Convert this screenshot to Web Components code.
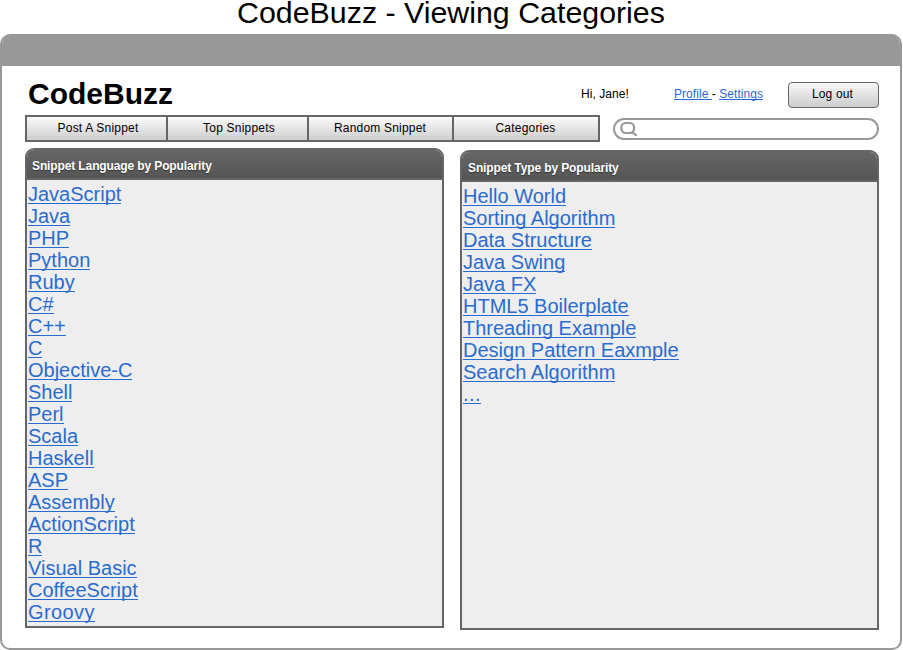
<!DOCTYPE html>
<html lang="en"><head><meta charset="utf-8"><title>CodeBuzz - Viewing Categories</title>
<style>
html,body{margin:0;background:#fff}
body{width:903px;height:650px;overflow:hidden;font-family:"Liberation Sans",Arial,sans-serif;color:#000}
</style></head><body>
<cb-page></cb-page>
<script>
const define=(name,html)=>{
  const t=document.createElement('template');t.innerHTML=html;
  customElements.define(name,class extends HTMLElement{
    constructor(){super();this.attachShadow({mode:'open'}).append(t.content.cloneNode(true));}
  });
};
define('cb-link',`<style>
:host{display:inline-block;color:#2a6bd0}
a{display:inline-block;color:inherit;text-decoration:none;line-height:inherit;
 background:linear-gradient(currentColor,currentColor) 0 var(--u,20px)/100% 1px no-repeat}
</style><a><slot></slot></a>`);
define('cb-button',`<style>
:host{display:flex;justify-content:center;box-sizing:border-box;width:91px;height:26px;border:1px solid #666;border-radius:4px;background:linear-gradient(#f8f8f8,#ccc);font-size:12px;line-height:22px;letter-spacing:.15px;padding-right:2px}
</style><slot></slot>`);
define('cb-tab',`<style>
:host{display:flex;justify-content:center;background:linear-gradient(#fbfbfb,#cecece);font-size:12px;line-height:22px;letter-spacing:.2px}
:host(:nth-child(-n+2)){padding-left:3px}
:host(:nth-child(n+3)){padding-right:1px}
</style><slot></slot>`);
define('cb-nav',`<style>
:host{display:grid;grid-template-columns:139px 139px 143px 144px;gap:2px;box-sizing:border-box;width:575px;height:27px;padding:2px;background:#666}
</style><slot></slot>`);
define('cb-search',`<style>
:host{display:flex;box-sizing:border-box;width:266px;height:22px;margin-top:3px;border:2px solid #999;border-radius:11px;background:#fff;padding:1px 0 0 5px}
svg{display:block}
</style><svg width="18" height="16" viewBox="0 0 18 16" fill="none" stroke="#999" stroke-width="2.2"><rect x="1.4" y="2" width="12.6" height="10" rx="4.2" ry="4.2"/><path d="M11.5 10.8L16.8 14.6"/></svg>`);
define('cb-header',`<style>
:host{display:block;height:49px}
.row{display:flex;align-items:flex-start;height:49px}
.logo{flex:1;margin:0;padding:11px 0 0 3px;font-size:30px;line-height:34px;font-weight:bold}
span{font-size:12px;line-height:14px;white-space:pre;margin-top:21px;letter-spacing:.06px}
.hi{width:93px}
.links{width:114px;--u:12px}
cb-button{margin-top:16px}
</style><div class="row"><h1 class="logo">CodeBuzz</h1><span class="hi">Hi, Jane!</span><span class="links"><cb-link>Profile </cb-link>- <cb-link>Settings</cb-link></span><cb-button>Log out</cb-button></div>`);
define('cb-panel',`<style>
:host{display:block;box-sizing:border-box;width:419px;height:480px;border:2px solid #666;border-radius:9px 9px 0 0;background:#eee;overflow:hidden}
header{box-sizing:border-box;height:30px;border-bottom:2px solid #666;background:linear-gradient(#666,#555);color:#fff;font-size:12px;line-height:14px;font-weight:bold;letter-spacing:-.12px;padding:4px 5px 0 var(--head-x,5px);display:flex;align-items:center;text-shadow:0 1px 1px #333}
.list{display:flex;flex-direction:column;align-items:flex-start;padding:3px 0 0 1px;font-size:20px;line-height:22px}
</style><header><slot name="heading"></slot></header><div class="list"><slot></slot></div>`);
define('cb-window',`<style>
:host{display:block;box-sizing:border-box;width:902px;height:616px;border:2px solid #999;border-top:0;border-radius:10px;background:#fff;overflow:hidden}
.bar{height:32px;background:#999}
.body{padding:0 21px 0 23px}
</style><div class="bar"></div><div class="body"><slot></slot></div>`);
const L=a=>a.map(s=>`<cb-link>${s}</cb-link>`).join('');
const langs=['JavaScript','Java','PHP','Python','Ruby','C#','C++','C','Objective-C','Shell','Perl','Scala','Haskell','ASP','Assembly','ActionScript','R','Visual Basic','CoffeeScript','Groovy'];
const types=['Hello World','Sorting Algorithm','Data Structure','Java Swing','Java FX','HTML5 Boilerplate','Threading Example','Design Pattern Eaxmple','Search Algorithm','...'];
define('cb-page',`<style>
:host{display:block;width:903px;height:650px}
.title{height:34px;line-height:26px;font-size:30.35px;text-align:center;white-space:nowrap;width:902px}
.row{display:flex;justify-content:space-between;align-items:flex-start}
.nav{height:33px}
cb-panel+cb-panel{margin-top:2px;--head-x:6px}
cb-link:last-child{letter-spacing:.4px}
</style><div class="title">CodeBuzz - Viewing Categories</div>
<cb-window><cb-header></cb-header>
<div class="row nav"><cb-nav><cb-tab>Post A Snippet</cb-tab><cb-tab>Top Snippets</cb-tab><cb-tab>Random Snippet</cb-tab><cb-tab>Categories</cb-tab></cb-nav><cb-search></cb-search></div>
<div class="row"><cb-panel><span slot="heading">Snippet Language by Popularity</span>${L(langs)}</cb-panel><cb-panel><span slot="heading">Snippet Type by Popularity</span>${L(types)}</cb-panel></div>
</cb-window>`);
</script></body></html>
